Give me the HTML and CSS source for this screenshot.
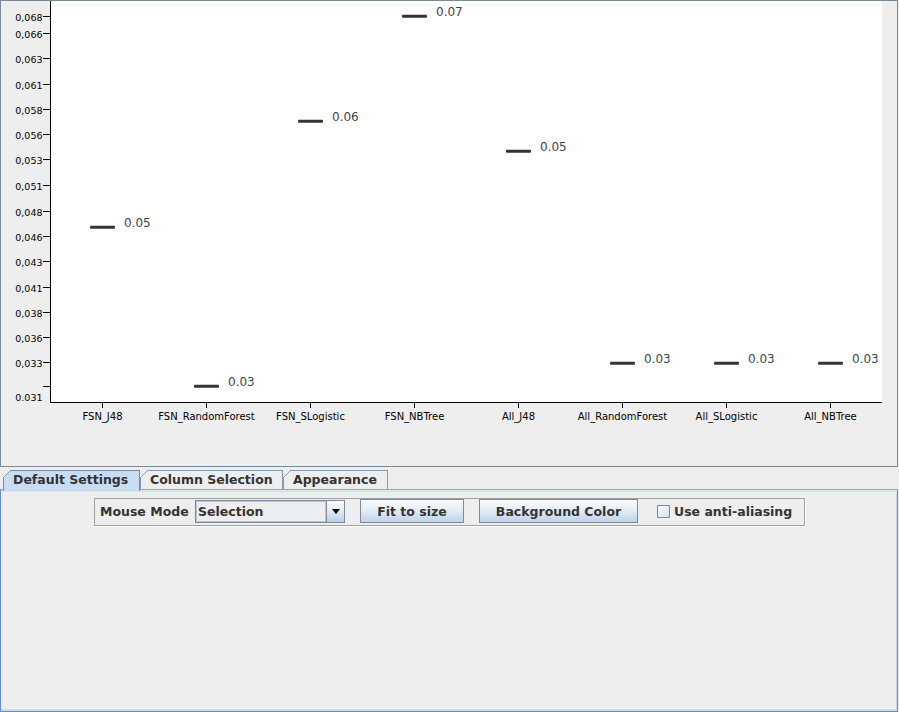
FILE: index.html
```html
<!DOCTYPE html>
<html>
<head>
<meta charset="utf-8">
<link rel="stylesheet" href="styles.css">
</head>
<body>
<div class="plot-panel">
  <svg class="chart" width="896" height="465" viewBox="1 1 896 465" xmlns="http://www.w3.org/2000/svg">
    <rect x="51" y="1" width="831" height="401" fill="#ffffff"/>
    <g class="axis" stroke="#000" stroke-width="1">
      <line x1="50.5" y1="1" x2="50.5" y2="403"/>
      <line x1="50" y1="402.5" x2="882" y2="402.5"/>
      <line x1="43" y1="16.5" x2="50" y2="16.5"/>
      <line x1="43" y1="33.5" x2="50" y2="33.5"/>
      <line x1="43" y1="58.5" x2="50" y2="58.5"/>
      <line x1="43" y1="84.5" x2="50" y2="84.5"/>
      <line x1="43" y1="109.5" x2="50" y2="109.5"/>
      <line x1="43" y1="134.5" x2="50" y2="134.5"/>
      <line x1="43" y1="159.5" x2="50" y2="159.5"/>
      <line x1="43" y1="185.5" x2="50" y2="185.5"/>
      <line x1="43" y1="211.5" x2="50" y2="211.5"/>
      <line x1="43" y1="236.5" x2="50" y2="236.5"/>
      <line x1="43" y1="261.5" x2="50" y2="261.5"/>
      <line x1="43" y1="287.5" x2="50" y2="287.5"/>
      <line x1="43" y1="312.5" x2="50" y2="312.5"/>
      <line x1="43" y1="337.5" x2="50" y2="337.5"/>
      <line x1="43" y1="362.5" x2="50" y2="362.5"/>
      <line x1="43" y1="386.5" x2="50" y2="386.5"/>
      <line x1="102.5" y1="402" x2="102.5" y2="408"/>
      <line x1="206.5" y1="402" x2="206.5" y2="408"/>
      <line x1="310.5" y1="402" x2="310.5" y2="408"/>
      <line x1="414.5" y1="402" x2="414.5" y2="408"/>
      <line x1="518.5" y1="402" x2="518.5" y2="408"/>
      <line x1="622.5" y1="402" x2="622.5" y2="408"/>
      <line x1="726.5" y1="402" x2="726.5" y2="408"/>
      <line x1="830.5" y1="402" x2="830.5" y2="408"/>
    </g>
    <g class="ylabels" text-anchor="end">
      <text x="42.5" y="20.5">0,068</text>
      <text x="42.5" y="37.5">0,066</text>
      <text x="42.5" y="62.5">0,063</text>
      <text x="42.5" y="88.5">0,061</text>
      <text x="42.5" y="113.5">0,058</text>
      <text x="42.5" y="138.5">0,056</text>
      <text x="42.5" y="163.5">0,053</text>
      <text x="42.5" y="189.5">0,051</text>
      <text x="42.5" y="215.5">0,048</text>
      <text x="42.5" y="240.5">0,046</text>
      <text x="42.5" y="265.5">0,043</text>
      <text x="42.5" y="291.5">0,041</text>
      <text x="42.5" y="316.5">0,038</text>
      <text x="42.5" y="341.5">0,036</text>
      <text x="42.5" y="366.5">0,033</text>
      <text x="42.5" y="400.8">0.031</text>
    </g>
    <g class="xlabels" text-anchor="middle">
      <text x="102.5" y="420">FSN_J48</text>
      <text x="206.5" y="420">FSN_RandomForest</text>
      <text x="310.5" y="420">FSN_SLogistic</text>
      <text x="414.5" y="420">FSN_NBTree</text>
      <text x="518.5" y="420">All_J48</text>
      <text x="622.5" y="420">All_RandomForest</text>
      <text x="726.5" y="420">All_SLogistic</text>
      <text x="830.5" y="420">All_NBTree</text>
    </g>
    <g class="bars" fill="#333333">
      <rect x="90" y="225.8" width="25" height="3" rx="1"/>
      <rect x="194" y="384.8" width="25" height="3" rx="1"/>
      <rect x="298" y="119.8" width="25" height="3" rx="1"/>
      <rect x="402" y="14.8" width="25" height="3" rx="1"/>
      <rect x="506" y="149.8" width="25" height="3" rx="1"/>
      <rect x="610" y="361.8" width="25" height="3" rx="1"/>
      <rect x="714" y="361.8" width="25" height="3" rx="1"/>
      <rect x="818" y="361.8" width="25" height="3" rx="1"/>
    </g>
    <g class="values">
      <text x="124" y="227">0.05</text>
      <text x="228" y="386">0.03</text>
      <text x="332" y="121">0.06</text>
      <text x="436" y="15.5">0.07</text>
      <text x="540" y="151">0.05</text>
      <text x="644" y="362.5">0.03</text>
      <text x="748" y="362.5">0.03</text>
      <text x="852" y="362.5">0.03</text>
    </g>
  </svg>
</div>

<div class="tabs">
  <div class="tab tab-default selected">Default Settings</div>
  <div class="tab tab-columns">Column Selection</div>
  <div class="tab tab-appearance">Appearance</div>
</div>

<div class="content">
  <div class="toolbar">
    <span class="label">Mouse Mode</span>
    <div class="combo">
      <div class="combo-field">Selection</div>
      <div class="combo-arrow"><span class="triangle"></span></div>
    </div>
    <div class="button btn-fit">Fit to size</div>
    <div class="button btn-bg">Background Color</div>
    <span class="checkbox"></span>
    <span class="check-label">Use anti-aliasing</span>
  </div>
</div>
</body>
</html>
```

FILE: styles.css
```css
html, body {
  margin: 0;
  padding: 0;
}
body {
  background: #eeeeee;
  font-family: "DejaVu Sans", "Liberation Sans", sans-serif;
  width: 899px;
  height: 712px;
  overflow: hidden;
}

.plot-panel {
  box-sizing: border-box;
  width: 898px;
  height: 467px;
  border: 1px solid #7a8a99;
  background: #eeeeee;
}
.chart {
  display: block;
}
.chart text {
  font-family: "DejaVu Sans", sans-serif;
}
.ylabels text {
  font-size: 9.5px;
  fill: #000;
}
.xlabels text {
  font-size: 10px;
  fill: #000;
}
.values text {
  font-size: 12px;
  fill: #444444;
}

.tabs {
  display: flex;
  align-items: flex-start;
  margin-top: 3px;
  padding-left: 3px;
  height: 19px;
  position: relative;
  z-index: 2;
}
.tab {
  position: relative;
  box-sizing: border-box;
  height: 19px;
  border: 1px solid #8a99a9;
  border-bottom: none;
  background: #eeeeee;
  color: #333333;
  font-weight: bold;
  font-size: 12.5px;
  line-height: 18px;
  padding-left: 9px;
  white-space: nowrap;
}
.tab::before {
  content: "";
  position: absolute;
  left: -1px;
  top: -1px;
  width: 8px;
  height: 8px;
  background: linear-gradient(135deg, #eeeeee 0, #eeeeee calc(50% - 0.6px), #8a99a9 calc(50% - 0.6px), #8a99a9 calc(50% + 0.6px), transparent calc(50% + 0.6px));
}
.tab.selected {
  background: #c8ddf2;
  height: 21px;
  border-color: #7a8a99;
}
.tab-default { width: 137px; }
.tab-columns { width: 143px; padding-left: 9px; }
.tab-appearance { width: 105px; }

.content {
  position: relative;
  z-index: 1;
  box-sizing: border-box;
  width: 898px;
  height: 223px;
  border-top: 1px solid #8ea8cf;
  border-left: 1px solid #6a8cc8;
  border-right: 1px solid #7a8a99;
  border-bottom: 1px solid #7a8a99;
  box-shadow: inset 0 2px 0 #d8e4f0, inset 0 -2px 0 #c8ddf2, inset -1px 0 0 #c8ddf2;
  padding-top: 8px;
  padding-left: 93px;
}

.toolbar {
  box-sizing: border-box;
  width: 711px;
  height: 28px;
  border: 1px solid #a0a0a0;
  box-shadow: 1px 1px 0 #ffffff;
  display: flex;
  align-items: flex-start;
  color: #333333;
  font-weight: bold;
  font-size: 12.5px;
}
.label {
  margin-left: 5px;
  width: 95px;
  line-height: 25px;
  white-space: nowrap;
}
.combo {
  box-sizing: border-box;
  margin-top: 1px;
  width: 150px;
  height: 23px;
  display: flex;
  border: 1px solid #7a8a99;
}
.combo-field {
  flex: 1;
  box-sizing: border-box;
  padding-left: 2px;
  line-height: 21px;
  background: #eeeeee;
  box-shadow: inset 0 0 0 1px #b3c8de;
}
.combo-arrow {
  box-sizing: border-box;
  width: 18px;
  border-left: 1px solid #7a8a99;
  background: linear-gradient(#fafcfe, #dde8f3 55%, #b8cfe5);
  display: flex;
  align-items: center;
  justify-content: center;
}
.triangle {
  width: 0;
  height: 0;
  border-left: 4.5px solid transparent;
  border-right: 4.5px solid transparent;
  border-top: 5px solid #000;
}
.button {
  box-sizing: border-box;
  height: 24px;
  border: 1px solid #7a8a99;
  background: linear-gradient(#fbfcfe, #e4edf6 45%, #bfd3e8);
  text-align: center;
  padding-top: 1px;
  line-height: 21px;
  white-space: nowrap;
}
.btn-fit {
  margin-left: 15px;
  width: 104px;
}
.btn-bg {
  margin-left: 15px;
  width: 159px;
}
.checkbox {
  box-sizing: border-box;
  margin-left: 19px;
  margin-top: 6px;
  width: 13px;
  height: 13px;
  border: 1px solid #7a8a99;
  background: linear-gradient(135deg, #fbfcfe, #d5e2ef);
}
.check-label {
  margin-left: 4px;
  line-height: 25px;
  white-space: nowrap;
}
```
